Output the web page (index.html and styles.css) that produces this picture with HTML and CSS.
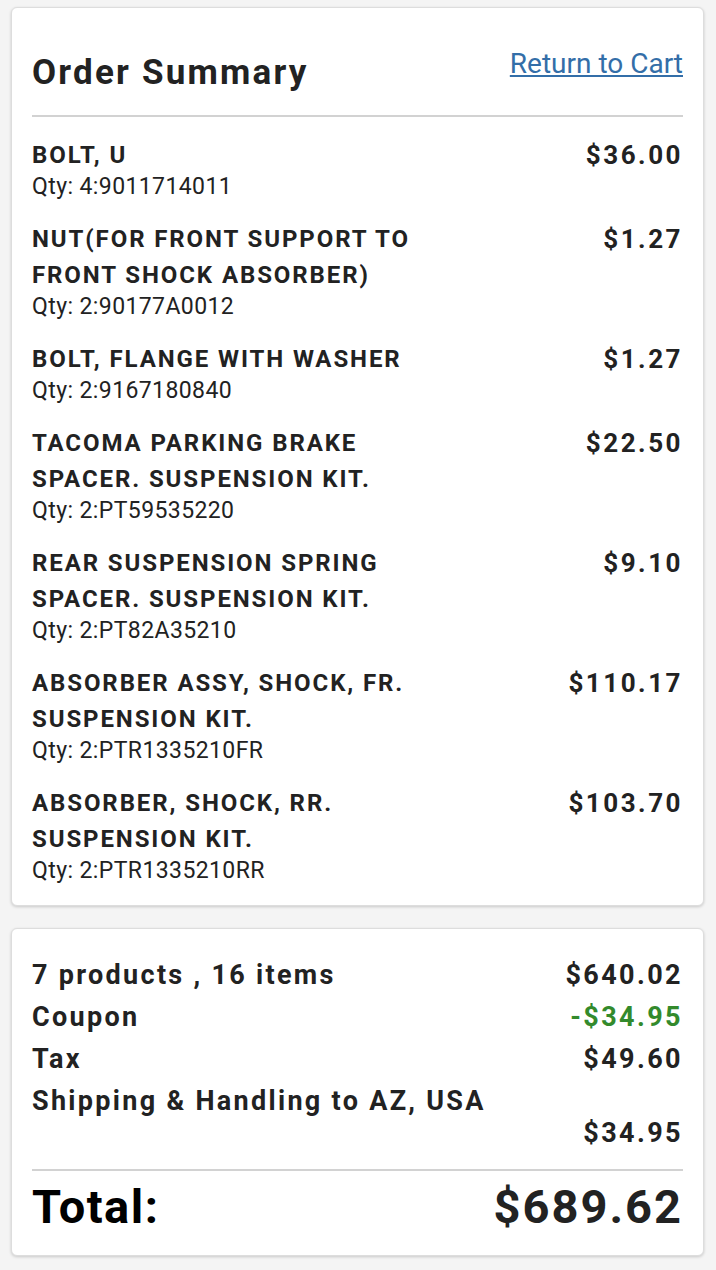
FILE: index.html
```html
<!DOCTYPE html>
<html lang="en">
<head>
    <link rel="stylesheet" href="styles.css">
</head>
<body>
    <section class="card order-card">
        <div class="order-header">
            <h1 class="order-title">Order Summary</h1>
            <a href="#" class="cart-link">Return to Cart</a>
        </div>
        <ul class="item-list">
            <li class="item">
                <div class="item-info">
                    <div class="item-name">BOLT, U</div>
                    <div class="item-qty">Qty: 4:9011714011</div>
                </div>
                <div class="item-price">$36.00</div>
            </li>
            <li class="item">
                <div class="item-info">
                    <div class="item-name">NUT(FOR FRONT SUPPORT TO FRONT SHOCK ABSORBER)</div>
                    <div class="item-qty">Qty: 2:90177A0012</div>
                </div>
                <div class="item-price">$1.27</div>
            </li>
            <li class="item">
                <div class="item-info">
                    <div class="item-name">BOLT, FLANGE WITH WASHER</div>
                    <div class="item-qty">Qty: 2:9167180840</div>
                </div>
                <div class="item-price">$1.27</div>
            </li>
            <li class="item">
                <div class="item-info">
                    <div class="item-name">TACOMA PARKING BRAKE SPACER. SUSPENSION KIT.</div>
                    <div class="item-qty">Qty: 2:PT59535220</div>
                </div>
                <div class="item-price">$22.50</div>
            </li>
            <li class="item">
                <div class="item-info">
                    <div class="item-name">REAR SUSPENSION SPRING SPACER. SUSPENSION KIT.</div>
                    <div class="item-qty">Qty: 2:PT82A35210</div>
                </div>
                <div class="item-price">$9.10</div>
            </li>
            <li class="item">
                <div class="item-info">
                    <div class="item-name">ABSORBER ASSY, SHOCK, FR. SUSPENSION KIT.</div>
                    <div class="item-qty">Qty: 2:PTR1335210FR</div>
                </div>
                <div class="item-price">$110.17</div>
            </li>
            <li class="item">
                <div class="item-info">
                    <div class="item-name">ABSORBER, SHOCK, RR. SUSPENSION KIT.</div>
                    <div class="item-qty">Qty: 2:PTR1335210RR</div>
                </div>
                <div class="item-price">$103.70</div>
            </li>
        </ul>
    </section>

    <section class="card totals-card">
        <div class="totals-row">
            <span>7 products , 16 items</span>
            <span class="amount">$640.02</span>
        </div>
        <div class="totals-row">
            <span>Coupon</span>
            <span class="amount discount">-$34.95</span>
        </div>
        <div class="totals-row">
            <span>Tax</span>
            <span class="amount">$49.60</span>
        </div>
        <div class="totals-row wrap">
            <span>Shipping &amp; Handling to AZ, USA</span>
            <span class="amount">$34.95</span>
        </div>
        <div class="grand-total">
            <span class="total-label">Total:</span>
            <span class="total-amount">$689.62</span>
        </div>
    </section>
</body>
</html>
```

FILE: styles.css
```css
body {
    font-family: 'Roboto', 'Liberation Sans', sans-serif;
    background-color: #f4f4f4;
    color: #222;
    margin: 0;
    padding: 7px 12px 14px 11px;
}

.card {
    background-color: #fff;
    border: 1px solid #ddd;
    border-radius: 6px;
    box-shadow: 0 1px 3px rgba(0, 0, 0, 0.18);
    padding: 0 20px;
}

.order-header {
    display: flex;
    justify-content: space-between;
    align-items: flex-start;
    padding: 44px 0 21px;
    border-bottom: 2px solid #d2d2d2;
}

.order-title {
    margin: 0;
    font-size: 35px;
    line-height: 42px;
    font-weight: 700;
    letter-spacing: 2.2px;
}

.cart-link {
    color: #336ea8;
    font-size: 28px;
    line-height: 24px;
}

.item-list {
    list-style: none;
    margin: 0;
    padding: 20px 0;
}

.item {
    display: flex;
    justify-content: space-between;
    align-items: flex-start;
    gap: 20px;
    margin-bottom: 20px;
}

.item:last-child {
    margin-bottom: 0;
}

.item-info {
    width: 410px;
}

.item-name {
    font-size: 24px;
    line-height: 36px;
    font-weight: 700;
    letter-spacing: 1.9px;
}

.item-qty {
    font-size: 23px;
    line-height: 28px;
    letter-spacing: 0.4px;
}

.item-price {
    font-size: 26px;
    line-height: 36px;
    font-weight: 700;
    letter-spacing: 2.5px;
    white-space: nowrap;
}

.totals-card {
    margin-top: 22px;
    padding-top: 30px;
    padding-bottom: 20px;
}

.totals-row {
    display: flex;
    justify-content: space-between;
    flex-wrap: wrap;
    font-size: 27px;
    line-height: 32px;
    font-weight: 700;
    letter-spacing: 2.3px;
    margin-bottom: 10px;
}

.totals-row .amount {
    letter-spacing: 2.4px;
}

.totals-row.wrap span:first-child {
    width: 100%;
}

.totals-row.wrap .amount {
    margin-left: auto;
}

.discount {
    color: #338a2c;
}

.grand-total {
    display: flex;
    justify-content: space-between;
    align-items: center;
    margin-top: 20px;
    padding-top: 8px;
    border-top: 2px solid #d2d2d2;
    font-weight: 700;
    line-height: 56px;
}

.total-label {
    font-size: 47px;
    color: #000;
    letter-spacing: 1.5px;
}

.total-amount {
    font-size: 47px;
    letter-spacing: 2px;
}
```
